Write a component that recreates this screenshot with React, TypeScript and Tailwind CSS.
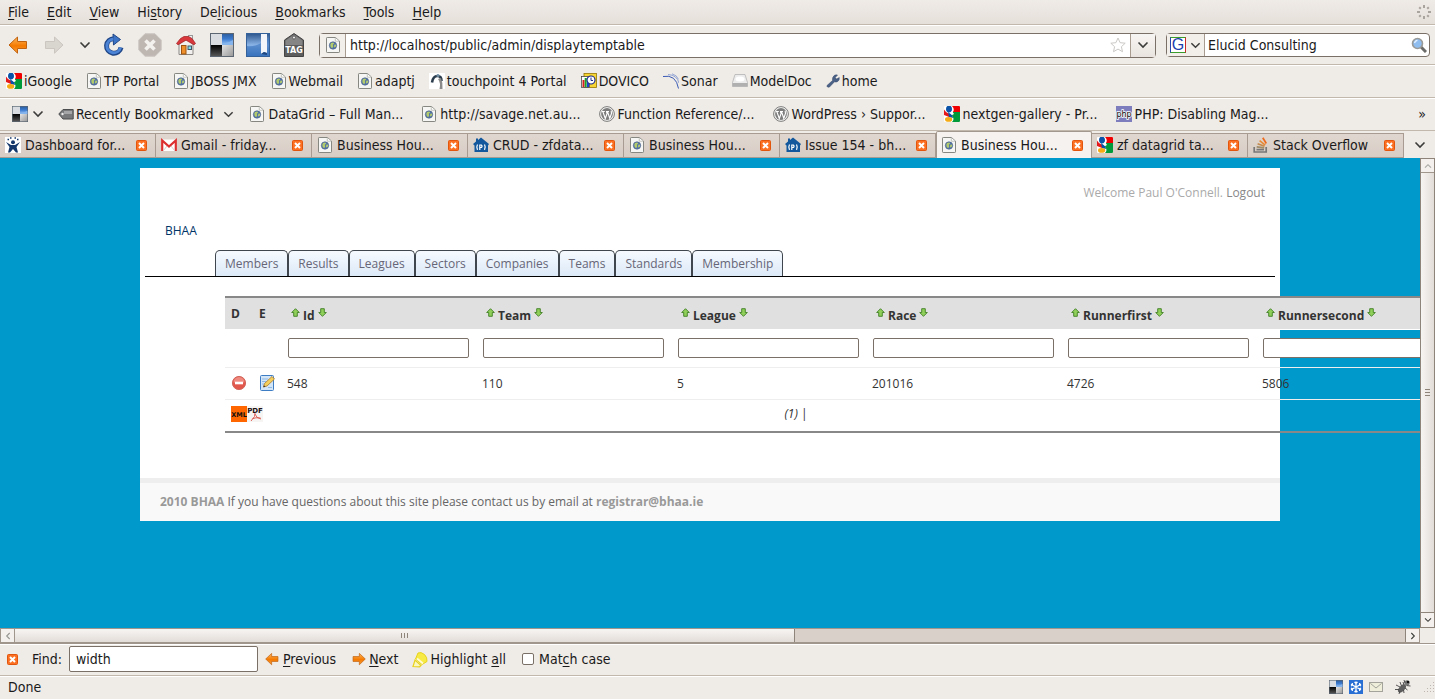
import type { ReactNode } from "react";

/* ---------- icons ---------- */

const PageIcon = () => (
    <svg width="16" height="16" viewBox="0 0 16 16" className="shrink-0">
        <path d="M1.5 1.2q0-.7.7-.7h8.3l4 3.6v10.7q0 .7-.7.7H2.2q-.7 0-.7-.7z" fill="#f6f6f4" stroke="#858780" />
        <path d="M10.3 .8v3.4h3.8" fill="#fff" stroke="#b5b6b1" strokeWidth=".8" />
        <circle cx="8" cy="8.500" r="3.700" fill="#5273a8" stroke="#4a5f86" strokeWidth=".6" />
        <path d="M6 6l2.200-.6 1 1-1.400 1.400.4 1.800-1 1.700-1.500-1.400-.4-2.100zM9.600 7.500l1.600.2-.4 2-1.400.8-.5-1.300z" fill="#b4cc6b" />
    </svg>
);

const GoogleIcon = () => (
    <svg width="16" height="16" viewBox="0 0 16 16" className="shrink-0">
        <rect width="16" height="16" rx="1" fill="#fff" />
        <path d="M8 0h7q1 0 1 1v5H9q2-3-1-6z" fill="#f00000" />
        <path d="M9 6h7v9q0 1-1 1H8q3-3 0-6z" fill="#019a3b" />
        <path d="M0 3.500l2 2.500 5 3-2 2-5-2z" fill="#e5191b" />
        <ellipse cx="5" cy="3" rx="3" ry="3.400" fill="#0b53a8" />
        <path d="M4 6l4 3 1 3-4-1z" fill="#0b53a8" />
        <ellipse cx="4.600" cy="13.400" rx="3.600" ry="2.400" fill="#f5ab15" />
        <path d="M8 5l2 3-2 1-1.500-2z" fill="#fff" />
    </svg>
);

const DeliciousIcon = ({ size = 16 }: { size?: number }) => (
    <svg width={size} height={size} viewBox="0 0 24 24" className="shrink-0">
        <defs>
            <linearGradient id="delBlue" x1="0" y1="0" x2="0" y2="1">
                <stop offset="0" stopColor="#2f5f9f" />
                <stop offset=".45" stopColor="#3b7ad0" />
                <stop offset="1" stopColor="#9cc6f5" />
            </linearGradient>
            <linearGradient id="delBlack" x1="0" y1="0" x2="0" y2="1">
                <stop offset="0" stopColor="#000" />
                <stop offset="1" stopColor="#555" />
            </linearGradient>
            <linearGradient id="delGray" x1="0" y1="0" x2="1" y2="1">
                <stop offset="0" stopColor="#e4e4e4" />
                <stop offset="1" stopColor="#9a9a9a" />
            </linearGradient>
        </defs>
        <rect width="24" height="24" fill="#5b6672" />
        <rect x="1" y="1" width="11" height="11" fill="#d9dde2" />
        <rect x="12" y="1" width="11" height="11" fill="url(#delBlue)" />
        <path d="M12 10q5 1 11-3v5H12z" fill="#85b5ec" />
        <rect x="1" y="12" width="11" height="11" fill="url(#delBlack)" />
        <rect x="12" y="12" width="11" height="11" fill="url(#delGray)" />
    </svg>
);

const BookmarksIcon = () => (
    <svg width="24" height="24" viewBox="0 0 24 24" className="shrink-0">
        <defs>
            <linearGradient id="bookBlue" x1="0" y1="0" x2="0" y2="1">
                <stop offset="0" stopColor="#2d568d" />
                <stop offset=".5" stopColor="#8ab4e6" />
                <stop offset="1" stopColor="#2e68b4" />
            </linearGradient>
        </defs>
        <rect x=".5" y=".5" width="23" height="23" fill="url(#bookBlue)" stroke="#34619a" />
        <path d="M1 13q9 2 22-8v18H1z" fill="#3f78c0" opacity=".65" />
        <path d="M15 1h6v19l-3-1-3 2z" fill="#f2f6fb" />
        <path d="M15 21l3-2 3 1v2z" fill="#1e4780" />
    </svg>
);

const TagButtonIcon = () => (
    <svg width="22" height="24" viewBox="0 0 22 24" className="shrink-0">
        <path d="M11 .5L20.500 7v16.500h-19V7z" fill="#5d5d5d" stroke="#444" />
        <path d="M11 1.500L19.500 7.500v4.500h-17V7.500z" fill="#858585" />
        <circle cx="11" cy="4.500" r="1.500" fill="#e8e8e8" stroke="#333" strokeWidth=".6" />
        <text x="11" y="20" textAnchor="middle" fontSize="8" fontWeight="700" fontFamily="DejaVu Sans, sans-serif" fill="#fff">
            TAG
        </text>
    </svg>
);

const ArrowIcon = ({ size, flip, muted }: { size: number; flip?: boolean; muted?: boolean }) => (
    <svg width={size} height={size} viewBox="0 0 20 20" className={flip ? "shrink-0 -scale-x-100" : "shrink-0"}>
        <defs>
            <linearGradient id="orangeFill" x1="0" y1="0" x2="0" y2="1">
                <stop offset="0" stopColor="#fcb75a" />
                <stop offset=".55" stopColor="#f57900" />
                <stop offset="1" stopColor="#f9a23f" />
            </linearGradient>
        </defs>
        <path
            d="M1 10L9.500 2v4.500h9v7h-9v4.700z"
            fill={muted ? "#d9d5cf" : "url(#orangeFill)"}
            stroke={muted ? "#cbc6bf" : "#c06210"}
            strokeLinejoin="round"
        />
    </svg>
);

const ReloadIcon = () => (
    <svg width="22" height="24" viewBox="0 0 22 24" className="shrink-0">
        <path d="M18 14.500a7.300 7.300 0 1 1-7-8.800" fill="none" stroke="#1f4687" strokeWidth="5" />
        <path d="M10 1l7.500 5.500L10.500 12z" fill="#3d73c4" stroke="#1f4687" strokeLinejoin="round" />
        <path d="M17.500 14.500a6.900 6.900 0 1 1-7-8.500" fill="none" stroke="#4b83d6" strokeWidth="3" />
    </svg>
);

const StopIcon = () => (
    <svg width="24" height="24" viewBox="0 0 24 24" className="shrink-0">
        <path d="M7 .8h10L23.200 7v10L17 23.200H7L.8 17V7z" fill="#bdb6b1" stroke="#cbc5c0" />
        <path d="M7.500 7.500l9 9M16.500 7.500l-9 9" stroke="#f3f1ee" strokeWidth="3.600" />
    </svg>
);

const HomeIcon = () => (
    <svg width="20" height="20" viewBox="0 0 20 20" className="shrink-0">
        <rect x="12.500" y=".5" width="4" height="6" fill="#eee" stroke="#999" />
        <path d="M3 9l7-5 7 5v10.500H3z" fill="#f2f0ee" stroke="#8a8784" />
        <path d="M.5 8.500L4.500 3.500 8 1.500h4.500l3.500 2 3.500 5-1.500 1.300-8-4.600-8 4.600z" fill="#d8383b" stroke="#a11f22" strokeWidth=".7" />
        <rect x="5.500" y="10.500" width="4.500" height="8.500" fill="#ef8f2b" stroke="#9c5410" />
        <rect x="12" y="11" width="3.500" height="3.500" fill="#7be0ea" stroke="#456" />
    </svg>
);

const ChevronIcon = ({ size = 12 }: { size?: number }) => (
    <svg width={size} height={size} viewBox="0 0 12 12" className="shrink-0">
        <path d="M1.500 3.500L6 8l4.500-4.500" fill="none" stroke="#3c3c3a" strokeWidth="1.600" />
    </svg>
);

const CloseIcon = () => (
    <svg width="11" height="11" viewBox="0 0 11 11" className="shrink-0">
        <rect x=".5" y=".5" width="10" height="10" rx="1" fill="#fb7022" stroke="#e2550c" />
        <path d="M3 3l5 5M8 3L3 8" stroke="#fff" strokeWidth="2" />
    </svg>
);

const TouchpointIcon = () => (
    <svg width="16" height="16" viewBox="0 0 16 16" className="shrink-0">
        <rect width="16" height="16" fill="#fff" />
        <path d="M3 9.500Q4 3 8.500 3q4 0 4 5" fill="none" stroke="#2b3d4c" strokeWidth="2.600" />
        <circle cx="9" cy="2.500" r="1.600" fill="#6d8a9e" />
        <path d="M9 6q3 4 1.500 10h3Q14 10 12 5z" fill="#8b8b8b" />
    </svg>
);

const DovicoIcon = () => (
    <svg width="16" height="16" viewBox="0 0 16 16" className="shrink-0">
        <rect x="3" y=".5" width="12.500" height="14" fill="#f6d434" stroke="#937500" strokeWidth=".8" />
        <rect x=".5" y="3.500" width="8" height="11" fill="#fff" stroke="#333" strokeWidth=".7" />
        <path d="M2.500 14V7" stroke="#d81e1e" strokeWidth="2" />
        <path d="M4.700 14V5" stroke="#1aa12c" strokeWidth="2" />
        <path d="M7 14V9" stroke="#1f3fd0" strokeWidth="2" />
        <circle cx="10" cy="7" r="4" fill="#fff" stroke="#1b2b8e" strokeWidth="1.200" />
        <path d="M10 4.500v3h2" fill="none" stroke="#1b2b8e" />
    </svg>
);

const SonarIcon = () => (
    <svg width="16" height="16" viewBox="0 0 16 16" className="shrink-0" fill="none" stroke="#3a5bb5">
        <path d="M0 3.500Q13 1 15.500 15.500" />
        <path d="M5 1.500Q14 2 16 10M9 .8q5 1.500 6.500 5.500" strokeWidth=".8" stroke="#7d95cf" />
    </svg>
);

const DriveIcon = () => (
    <svg width="16" height="16" viewBox="0 0 16 16" className="shrink-0">
        <path d="M3 1.500h10l2.500 8v4H.5v-4z" fill="#ececec" stroke="#b4b4b4" strokeWidth=".8" />
        <path d="M.5 10h15v3.500H.5z" fill="#b0b0b0" />
        <ellipse cx="8" cy="6" rx="4.500" ry="2.500" fill="#fff" />
    </svg>
);

const WrenchIcon = () => (
    <svg width="14" height="14" viewBox="0 0 14 14" className="shrink-0">
        <path
            d="M1 11.500l5.500-5Q6 3 8.500 1.300q1.500-.8 3-.2L9.300 3.500l1.200 1.600 2.800-1.600q.4 2.800-1.600 4-1.700 1-3.200.3L3.500 13q-1.300.6-2.200-.2Q.6 12.200 1 11.500z"
            fill="#4b6186"
            stroke="#34496d"
            strokeWidth=".5"
        />
    </svg>
);

const TagIcon = () => (
    <svg width="16" height="16" viewBox="0 0 16 16" className="shrink-0">
        <path d="M.8 8L5 3.500h10.200v9.500H5z" fill="#77797b" stroke="#4b4d4f" />
        <path d="M6 5h8v3H6z" fill="#a4a6a8" />
        <circle cx="4.500" cy="8" r="1.200" fill="#eee" />
    </svg>
);

const WordPressIcon = () => (
    <svg width="16" height="16" viewBox="0 0 16 16" className="shrink-0">
        <circle cx="8" cy="8" r="7.400" fill="#f2f2f0" stroke="#7d7d7d" strokeWidth="1" />
        <circle cx="8" cy="8" r="5.900" fill="#7d7d7d" />
        <path d="M3 5.500h2.800M7 5.500h3M3.800 5.500l2.500 7 1.800-5-.7-2M8.500 5.500l2.300 7 1.800-5.500q-.8-1-.2-2.200" fill="none" stroke="#fff" strokeWidth="1.100" />
    </svg>
);

const PhpIcon = () => (
    <svg width="16" height="16" viewBox="0 0 16 16" className="shrink-0">
        <rect width="16" height="16" fill="#7d7dbd" />
        <text x="8" y="11" textAnchor="middle" fontSize="8" fontFamily="DejaVu Sans, sans-serif" fill="#000" stroke="#fff" strokeWidth="1.600" paintOrder="stroke">
            php
        </text>
    </svg>
);

const JumpIcon = () => (
    <svg width="16" height="16" viewBox="0 0 16 16" className="shrink-0">
        <rect width="16" height="16" fill="#fff" />
        <path d="M1 5l5 3h4l5-3-3.500 5L13 15.500h-2L8 12l-3 3.500H3L4.500 10z" fill="#14376b" />
        <circle cx="8" cy="5.200" r="2" fill="#14376b" />
        <path d="M2.500 2.500h1.500M5 1h1.500M9.500 1H11M12 2.500h1.500" stroke="#14376b" strokeWidth="1.300" />
    </svg>
);

const GmailIcon = () => (
    <svg width="16" height="16" viewBox="0 0 16 16" className="shrink-0">
        <rect y="2.500" width="16" height="11.500" rx="1" fill="#fff" />
        <path d="M1.200 14V3.500L8 9.500l6.800-6V14" fill="none" stroke="#dc2f30" strokeWidth="2.200" />
        <path d="M2.500 13.500L6 9M13.500 13.500L10 9" stroke="#d8d0cf" />
    </svg>
);

const CodeHouseIcon = () => (
    <svg width="16" height="16" viewBox="0 0 16 16" className="shrink-0">
        <path d="M8 .5L16 7l-1 1.500V15H1.500V8.500L0 7l3-2.500V1.500h2v1.400z" fill="#13589c" />
        <path d="M4.500 7.500q-1.500 2.700 0 5.400M11.500 7.500q1.500 2.700 0 5.400M6.800 13V8h1.500q1.500 1.200 0 2.500H6.800" fill="none" stroke="#fff" strokeWidth="1.200" />
    </svg>
);

const StackIcon = () => (
    <svg width="16" height="16" viewBox="0 0 16 16" className="shrink-0" fill="none" strokeWidth="1.700">
        <path d="M1.200 10v5h12V10" stroke="#777" />
        <path d="M3.500 12.600h7.500" stroke="#777" />
        <path d="M3.700 9.800l7.500 1" stroke="#a08b68" />
        <path d="M4.600 6.700l6.900 2.600" stroke="#c58b4d" />
        <path d="M6.600 3.600l5.600 4.500" stroke="#e78b35" />
        <path d="M9.800.8l3.500 5.700" stroke="#ef6a1b" />
    </svg>
);

const HighlightIcon = () => (
    <svg width="17" height="17" viewBox="0 0 17 17" className="shrink-0">
        <path d="M1 15.500L3 9l6 5.500-1.500 1.300z" fill="#fbf7c0" stroke="#e8d31c" strokeWidth="1.200" />
        <path d="M3.500 8L6 2q3-1.500 6.500 1.500 3 3 2.500 7l-5 3z" fill="#f8ea45" stroke="#e8d31c" />
        <path d="M5 7.500l6 5" stroke="#fffbd4" strokeWidth="1.800" />
    </svg>
);

const SortIcon = ({ down }: { down?: boolean }) => (
    <svg width="9" height="9" viewBox="0 0 9 9" className={down ? "rotate-180" : ""}>
        <path d="M4.500.7L8.300 4.500H6.300v3.800H2.700V4.500H.7z" fill="#8fcf5a" stroke="#3f7f22" strokeWidth=".9" />
    </svg>
);

const DeleteIcon = () => (
    <svg width="16" height="16" viewBox="0 0 16 16">
        <circle cx="8" cy="8" r="6.600" fill="#e2574c" stroke="#d2695f" />
        <path d="M2.500 7.500a5.500 5.500 0 0 1 11 0z" fill="#ee8a80" />
        <rect x="4" y="6.700" width="8" height="2.600" fill="#fff" />
    </svg>
);

const EditIcon = () => (
    <svg width="16" height="16" viewBox="0 0 16 16">
        <rect x="1.500" y=".5" width="13" height="15" rx="1" fill="#d3e6f8" stroke="#3e7cc4" />
        <path d="M3 4h6M3 6.500h4M3 9h2M9 12.500h4" stroke="#8fb8e2" />
        <path d="M4.500 12l1-3.500 7.500-7 2.500 2.500L8 11z" fill="#f5cf5c" stroke="#a97a2c" strokeWidth=".8" />
        <path d="M4.300 12.300l.6-2 1.500 1.400z" fill="#333" />
    </svg>
);

const XmlIcon = () => (
    <svg width="16" height="16" viewBox="0 0 16 16">
        <rect width="16" height="16" fill="#f60" />
        <text x="8" y="10.500" textAnchor="middle" fontSize="6.500" fontWeight="700" fontFamily="DejaVu Sans, sans-serif" fill="#111">
            XML
        </text>
    </svg>
);

const PdfIcon = () => (
    <svg width="16" height="16" viewBox="0 0 16 16">
        <rect width="16" height="16" fill="#f7f4f4" />
        <text x="8" y="6.500" textAnchor="middle" fontSize="7" fontWeight="700" fontFamily="DejaVu Sans, sans-serif" fill="#221111">
            PDF
        </text>
        <path d="M8 7q1 3-4 8M8 8q1 4 6 5M5.500 12.700q3-1.500 8-.7" fill="none" stroke="#d9534a" strokeWidth=".9" />
    </svg>
);

const ThrobberIcon = () => (
    <svg width="14" height="14" viewBox="0 0 14 14" stroke="#aaa49e" strokeWidth="2">
        <path d="M7 0v3M7 11v3M0 7h3M11 7h3" />
        <path d="M2.200 2.200l1.600 1.600M10.200 10.200l1.600 1.600M11.800 2.200l-1.600 1.600M3.800 10.200l-1.600 1.600" />
    </svg>
);

const StarIcon = () => (
    <svg width="16" height="16" viewBox="0 0 16 16" className="shrink-0">
        <path d="M8 1l2.100 4.700 5.100.5-3.800 3.500 1.100 5L8 12.100l-4.500 2.600 1.100-5L.8 6.200l5.100-.5z" fill="#fff" stroke="#cbc9c6" />
    </svg>
);

const SearchIcon = () => (
    <svg width="16" height="16" viewBox="0 0 16 16" className="shrink-0">
        <path d="M10 10l5 5" stroke="#6b6b69" strokeWidth="3" />
        <circle cx="6.500" cy="6.500" r="5" fill="#8fbdf0" stroke="#9a9a98" strokeWidth="1.600" />
        <path d="M3.500 6q.5-2.500 3-2.700" fill="none" stroke="#e4f1ff" strokeWidth="1.300" />
    </svg>
);

const GLetterIcon = () => (
    <span className="flex size-4 shrink-0 items-center justify-center border border-t-[#3a9c2b] border-r-[#c92a2a] border-b-[#3a9c2b] border-l-[#2846b0] bg-white font-['Liberation_Sans',sans-serif] text-base leading-4 text-[#1a3fae]">
        G
    </span>
);

const SnowIcon = () => (
    <svg width="14" height="14" viewBox="0 0 14 14" stroke="#fff" strokeWidth="1.200">
        <rect width="14" height="14" fill="#2a6fd3" stroke="none" />
        <path d="M7 1.500v11M2 4.200l10 5.600M12 4.200L2 9.800M5.500 2L7 3.500 8.500 2M5.500 12L7 10.500 8.500 12M2 6l1.500-1L3.300 3M12 6l-1.500-1 .2-2M2 8l1.500 1-.2 2M12 8l-1.500 1 .2 2" fill="none" />
    </svg>
);

const MailIcon = () => (
    <svg width="14" height="14" viewBox="0 0 14 14">
        <rect x=".5" y="2.500" width="13" height="9" fill="#eeeeda" stroke="#a3a39b" />
        <path d="M1.500 3.500L7 8l5.500-4.500" fill="none" stroke="#a3a39b" />
    </svg>
);

const BugIcon = () => (
    <svg width="16" height="16" viewBox="0 0 16 16">
        <ellipse cx="7" cy="9.500" rx="2.800" ry="5" transform="rotate(42 7 9.500)" fill="#5d5d5d" />
        <circle cx="12" cy="3.800" r="2.600" fill="#777" />
        <circle cx="13" cy="3" r="1.300" fill="#111" />
        <path d="M5 3l1.500 4M1 6l4 2M0 10.500h4M4 15l1-3M9 14l-.5-3M12.500 11L10 9M9 1l1 3M8 3l1 3M15.500 7l-4-.5" stroke="#444" strokeWidth=".9" />
    </svg>
);

const ResizeGrip = () => (
    <svg width="12" height="12" viewBox="0 0 12 12" fill="#bdb5ae">
        <path d="M10 1h1v1h-1zM7 4h1v1H7zM10 4h1v1h-1zM4 7h1v1H4zM7 7h1v1H7zM10 7h1v1h-1zM1 10h1v1H1zM4 10h1v1H4zM7 10h1v1H7zM10 10h1v1h-1z" />
    </svg>
);

/* ---------- data ---------- */

// [before, access key, after]
const menus = [
    ["", "F", "ile"],
    ["", "E", "dit"],
    ["", "V", "iew"],
    ["Hi", "s", "tory"],
    ["De", "l", "icious"],
    ["", "B", "ookmarks"],
    ["", "T", "ools"],
    ["", "H", "elp"],
];

const bookmarks: { icon: ReactNode; label: string }[] = [
    { icon: <GoogleIcon />, label: "iGoogle" },
    { icon: <PageIcon />, label: "TP Portal" },
    { icon: <PageIcon />, label: "JBOSS JMX" },
    { icon: <PageIcon />, label: "Webmail" },
    { icon: <PageIcon />, label: "adaptj" },
    { icon: <TouchpointIcon />, label: "touchpoint 4 Portal" },
    { icon: <DovicoIcon />, label: "DOVICO" },
    { icon: <SonarIcon />, label: "Sonar" },
    { icon: <DriveIcon />, label: "ModelDoc" },
    { icon: <WrenchIcon />, label: "home" },
];

const recentBookmarks: { icon: ReactNode; label: string }[] = [
    { icon: <PageIcon />, label: "DataGrid – Full Man..." },
    { icon: <PageIcon />, label: "http://savage.net.au..." },
    { icon: <WordPressIcon />, label: "Function Reference/..." },
    { icon: <WordPressIcon />, label: "WordPress › Suppor..." },
    { icon: <GoogleIcon />, label: "nextgen-gallery - Pr..." },
    { icon: <PhpIcon />, label: "PHP: Disabling Mag..." },
];

const tabs: { icon: ReactNode; label: string; active?: boolean }[] = [
    { icon: <JumpIcon />, label: "Dashboard for..." },
    { icon: <GmailIcon />, label: "Gmail - friday..." },
    { icon: <PageIcon />, label: "Business Hou..." },
    { icon: <CodeHouseIcon />, label: "CRUD - zfdata..." },
    { icon: <PageIcon />, label: "Business Hou..." },
    { icon: <CodeHouseIcon />, label: "Issue 154 - bh..." },
    { icon: <PageIcon />, label: "Business Hou...", active: true },
    { icon: <GoogleIcon />, label: "zf datagrid ta..." },
    { icon: <StackIcon />, label: "Stack Overflow" },
];

const sections = ["Members", "Results", "Leagues", "Sectors", "Companies", "Teams", "Standards", "Membership"];

const columns = [
    { name: "Id", value: "548" },
    { name: "Team", value: "110" },
    { name: "League", value: "5" },
    { name: "Race", value: "201016" },
    { name: "Runnerfirst", value: "4726" },
    { name: "Runnersecond", value: "5806" },
];

/* ---------- browser chrome ---------- */

const MenuBar = () => (
    <nav className="flex h-[25px] items-center gap-[18px] border-b border-[#c3b8ac] bg-linear-to-b from-[#efebe7] to-[#e6e0da] px-2">
        {menus.map(([before, key, after]) => (
            <button key={before + key + after}>
                {before}
                <span className="underline underline-offset-2">{key}</span>
                {after}
            </button>
        ))}
        <span className="-mr-1 ml-auto">
            <ThrobberIcon />
        </span>
    </nav>
);

const NavBar = () => (
    <div className="flex h-10 items-center border-t border-b border-t-white border-b-[#c3b8ac] pr-[5px] pl-2">
        <button aria-label="Back" className="mr-4">
            <ArrowIcon size={20} />
        </button>
        <button aria-label="Forward" className="mr-[15px]">
            <ArrowIcon size={20} flip muted />
        </button>
        <button aria-label="History" className="mr-3">
            <ChevronIcon />
        </button>
        <button aria-label="Reload" className="mr-[13px]">
            <ReloadIcon />
        </button>
        <button aria-label="Stop" className="mr-[14px]">
            <StopIcon />
        </button>
        <button aria-label="Home" className="mr-[14px]">
            <HomeIcon />
        </button>
        <button aria-label="Delicious" className="mr-3">
            <DeliciousIcon size={24} />
        </button>
        <button aria-label="Bookmarks" className="mr-[13px]">
            <BookmarksIcon />
        </button>
        <button aria-label="Tag" className="mr-[14px]">
            <TagButtonIcon />
        </button>
        <div className="flex h-[25px] flex-1 items-stretch rounded-sm border border-[#7b7067] bg-white">
            <span className="flex w-[26px] items-center justify-center border-r border-[#a89c91] bg-[#f2efeb]">
                <PageIcon />
            </span>
            <input aria-label="Address" defaultValue="http://localhost/public/admin/displaytemptable" className="min-w-0 flex-1 px-1 outline-none" />
            <button aria-label="Bookmark this page" className="px-1">
                <StarIcon />
            </button>
            <button aria-label="Show history" className="flex w-[25px] items-center justify-center border-l border-[#a89c91] bg-linear-to-b from-[#f7f5f3] to-[#e9e4df]">
                <ChevronIcon />
            </button>
        </div>
        <div className="ml-[10px] flex h-6 w-[264px] items-stretch rounded-sm border border-[#7b7067] bg-white">
            <button aria-label="Search engine" className="flex w-[38px] items-center gap-1 border-r border-[#a89c91] bg-[#f2efeb] pl-[3px]">
                <GLetterIcon />
                <ChevronIcon size={11} />
            </button>
            <input aria-label="Search" defaultValue="Elucid Consulting" className="min-w-0 flex-1 px-[3px] outline-none" />
            <button aria-label="Go" className="px-[2px]">
                <SearchIcon />
            </button>
        </div>
    </div>
);

const BookmarkBar = () => (
    <div className="flex h-[33px] items-center gap-[14px] border-t border-b border-t-white border-b-[#c3b8ac] pb-px pl-[6px]">
        {bookmarks.map(({ icon, label }) => (
            <button key={label} className="flex items-center gap-[2px] whitespace-nowrap">
                {icon}
                {label}
            </button>
        ))}
    </div>
);

const RecentBar = () => (
    <div className="flex h-[33px] items-center border-t border-b border-t-white border-b-[#c3b8ac] pr-[9px] pb-px pl-3">
        <button aria-label="Delicious menu" className="mr-[14px] flex items-center gap-1">
            <DeliciousIcon />
            <ChevronIcon />
        </button>
        <button className="mr-[15px] flex items-center gap-[2px] whitespace-nowrap">
            <TagIcon />
            Recently Bookmarked
            <span className="ml-2">
                <ChevronIcon size={11} />
            </span>
        </button>
        <div className="flex gap-[18px]">
            {recentBookmarks.map(({ icon, label }) => (
                <button key={label} className="flex items-center gap-[3px] whitespace-nowrap">
                    {icon}
                    {label}
                </button>
            ))}
        </div>
        <button aria-label="More bookmarks" className="ml-auto">
            »
        </button>
    </div>
);

const TabStrip = () => (
    <div className="flex h-[27px] items-end">
        {tabs.map(({ icon, label, active }, i) => (
            <div
                key={i}
                className={
                    active
                        ? "flex h-[27px] min-w-0 flex-1 items-center rounded-t-xs border border-b-0 border-[#a3988d] bg-[#f5f2ef] pl-1"
                        : "flex h-[25px] min-w-0 flex-1 items-center border border-l-0 border-[#a89c92] bg-linear-to-b from-[#e0d7d0] to-[#d7cdc5] pb-px pl-[5px]"
                }
            >
                <button className="flex min-w-0 flex-1 items-center gap-1 whitespace-nowrap">
                    {icon}
                    {label}
                </button>
                <button aria-label="Close tab" className="mr-2">
                    <CloseIcon />
                </button>
            </div>
        ))}
        <button aria-label="List all tabs" className="flex h-[27px] w-[31px] items-center justify-center">
            <ChevronIcon />
        </button>
    </div>
);

const VerticalScrollbar = () => (
    <div className="flex w-[15px] shrink-0 flex-col border border-[#8f847a] bg-[#d9d0c9]">
        <button aria-label="Scroll up" className="flex h-[14px] items-center justify-center border-b border-[#a1968c] bg-[#f3f0ed]">
            <span className="rotate-180 opacity-40">
                <ChevronIcon size={8} />
            </span>
        </button>
        <div className="flex flex-1 flex-col items-center justify-center gap-[2px] bg-linear-to-r from-[#f7f5f3] to-[#e3ddd8]">
            <span className="h-px w-[5px] bg-[#8f847a]" />
            <span className="h-px w-[5px] bg-[#8f847a]" />
            <span className="h-px w-[5px] bg-[#8f847a]" />
        </div>
        <button aria-label="Scroll down" className="flex h-[15px] items-center justify-center border-t border-[#8f847a] bg-[#f3f0ed]">
            <ChevronIcon size={8} />
        </button>
    </div>
);

const HorizontalScrollbar = () => (
    <div className="flex h-4 border-b border-[#a1968c] pr-[15px]">
        <div className="flex flex-1 border border-[#a1968c] bg-[#d9d0c9]">
            <button aria-label="Scroll left" className="flex w-[14px] items-center justify-center border-r border-[#a1968c] bg-[#f3f0ed]">
                <span className="rotate-90 opacity-50">
                    <ChevronIcon size={8} />
                </span>
            </button>
            <div className="flex w-[55%] items-center justify-center gap-[2px] border-r border-[#8f847a] bg-linear-to-b from-[#f7f5f3] to-[#e3ddd8]">
                <span className="h-[5px] w-px bg-[#8f847a]" />
                <span className="h-[5px] w-px bg-[#8f847a]" />
                <span className="h-[5px] w-px bg-[#8f847a]" />
            </div>
            <button aria-label="Scroll right" className="ml-auto flex w-[14px] items-center justify-center border-l border-[#8f847a] bg-[#f3f0ed]">
                <span className="-rotate-90">
                    <ChevronIcon size={8} />
                </span>
            </button>
        </div>
    </div>
);

const FindBar = () => (
    <div className="flex h-8 items-center border-t border-b border-t-white border-b-[#c3b8ac] pb-[2px] pl-[7px]">
        <button aria-label="Close find bar" className="mr-[14px]">
            <CloseIcon />
        </button>
        <label htmlFor="find" className="mr-[7px]">
            Find:
        </label>
        <input id="find" defaultValue="width" className="mr-[7px] h-[26px] w-[189px] rounded-xs border border-[#7b7067] bg-white px-[6px] outline-none" />
        <button className="mr-4 flex items-center gap-1">
            <ArrowIcon size={14} />
            <span>
                <span className="underline underline-offset-2">P</span>revious
            </span>
        </button>
        <button className="mr-[14px] flex items-center gap-[3px]">
            <ArrowIcon size={14} flip />
            <span>
                <span className="underline underline-offset-2">N</span>ext
            </span>
        </button>
        <button className="mr-4 flex items-center gap-px">
            <HighlightIcon />
            <span>
                Highlight <span className="underline underline-offset-2">a</span>ll
            </span>
        </button>
        <input id="match-case" type="checkbox" className="mr-[5px] size-3 appearance-none rounded-xs border border-[#7b7067] bg-white" />
        <label htmlFor="match-case">
            Mat<span className="underline underline-offset-2">c</span>h case
        </label>
    </div>
);

const StatusBar = () => (
    <footer className="flex h-[23px] items-center border-t border-white pb-[3px] pl-2">
        <span>Done</span>
        <div className="ml-auto flex items-center gap-[6px]">
            <DeliciousIcon size={14} />
            <SnowIcon />
            <MailIcon />
            <span className="mx-[6px]">
                <BugIcon />
            </span>
            <ResizeGrip />
        </div>
    </footer>
);

/* ---------- page content ---------- */

const DataGrid = () => (
    <table className="w-[1226px] table-fixed border-collapse border-y-2 border-[#888] text-left text-[#333]">
        <colgroup>
            <col className="w-7" />
            <col className="w-7" />
            {columns.map(({ name }) => (
                <col key={name} className="w-[195px]" />
            ))}
        </colgroup>
        <thead>
            <tr className="h-8 border-b border-white bg-[#e0e0e0]">
                <th className="px-[6px] pt-[2px]">D</th>
                <th className="px-[6px] pt-[2px]">E</th>
                {columns.map(({ name }) => (
                    <th key={name} className="px-[10px] pt-[5px]">
                        <div className="flex items-center gap-[3px]">
                            <button aria-label={`Sort ${name} ascending`} className="pb-[6px]">
                                <SortIcon />
                            </button>
                            {name}
                            <button aria-label={`Sort ${name} descending`} className="pb-[7px]">
                                <SortIcon down />
                            </button>
                        </div>
                    </th>
                ))}
            </tr>
        </thead>
        <tbody>
            <tr className="h-[38px] border-b border-[#eee]">
                <td />
                <td />
                {columns.map(({ name }) => (
                    <td key={name} className="px-[7px]">
                        <input aria-label={`Filter ${name}`} className="block h-5 w-full rounded-xs border border-[#7b7067] bg-white px-1" />
                    </td>
                ))}
            </tr>
            <tr className="h-8 border-b border-[#eee]">
                <td className="pl-[6px]">
                    <button aria-label="Delete" className="block">
                        <DeleteIcon />
                    </button>
                </td>
                <td className="pl-[6px]">
                    <button aria-label="Edit" className="block">
                        <EditIcon />
                    </button>
                </td>
                {columns.map(({ name, value }) => (
                    <td key={name} className="px-[6px] pt-[2px]">
                        {value}
                    </td>
                ))}
            </tr>
            <tr className="h-[33px]">
                <td colSpan={2} className="pl-[6px]">
                    <div className="flex pb-[2px]">
                        <button aria-label="Export XML">
                            <XmlIcon />
                        </button>
                        <button aria-label="Export PDF">
                            <PdfIcon />
                        </button>
                    </div>
                </td>
                <td colSpan={6} className="pr-[140px] pb-[2px] text-center">
                    <em>(1)</em> |
                </td>
            </tr>
        </tbody>
    </table>
);

const Page = () => (
    <main className="min-w-0 flex-1 overflow-hidden bg-[#0099cc] pt-[10px] font-['Open_Sans',sans-serif] text-xs leading-4 text-[#333]">
        <div className="mx-auto w-[1140px] max-w-full bg-white">
            <p className="pt-[17px] pr-[15px] text-right text-[#aaa]">
                Welcome Paul O'Connell.{" "}
                <a href="#logout" className="text-[#888]">
                    Logout
                </a>
            </p>
            <h1 className="pt-[22px] pl-[25px] text-[#003366]">BHAA</h1>
            <nav className="mx-[5px] mt-[11px] flex border-b border-black pl-[70px]">
                {sections.map((name) => (
                    <a
                        key={name}
                        href={`#${name.toLowerCase()}`}
                        className="h-[26px] rounded-t-[5px] border border-b-0 border-[#3f464d] bg-linear-to-b from-[#f6faff] to-[#dce9f7] px-[9px] pt-[5px] text-[#667]"
                    >
                        {name}
                    </a>
                ))}
            </nav>
            <div className="pt-[19px] pb-[45px] pl-[85px]">
                <DataGrid />
            </div>
            <footer className="border-t-[5px] border-[#eee] bg-[#f9f9f9] px-5 py-[11px] text-[#666]">
                <b className="text-[#999]">2010 BHAA</b> If you have questions about this site please contact us by email at{" "}
                <a href="mailto:registrar@bhaa.ie" className="font-bold text-[#999]">
                    registrar@bhaa.ie
                </a>
            </footer>
        </div>
    </main>
);

const App = () => (
    <div className="flex h-screen flex-col overflow-hidden bg-[#efebe7] font-['DejaVu_Sans_Condensed','DejaVu_Sans',sans-serif] text-sm leading-5 text-[#1a1a1a]">
        <MenuBar />
        <NavBar />
        <BookmarkBar />
        <RecentBar />
        <TabStrip />
        <div className="flex min-h-0 flex-1">
            <Page />
            <VerticalScrollbar />
        </div>
        <HorizontalScrollbar />
        <FindBar />
        <StatusBar />
    </div>
);

export default App;
